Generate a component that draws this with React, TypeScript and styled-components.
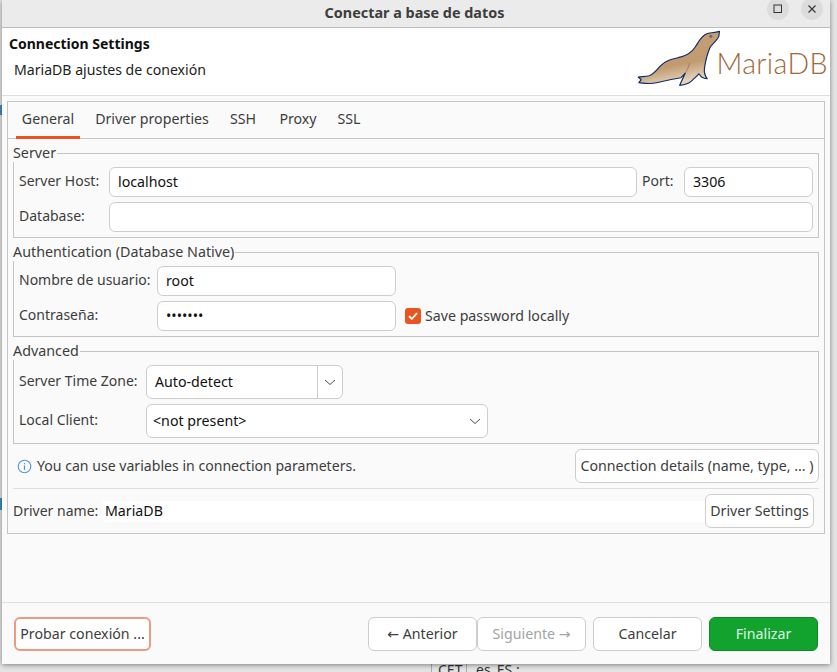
import React from "react";
import styled, { createGlobalStyle } from "styled-components";

const Global = createGlobalStyle`
  html, body { margin: 0; padding: 0; width: 837px; height: 672px; overflow: hidden; background: #e6e6e6; }
  * { box-sizing: border-box; }
  body { font-family: "Noto Sans", "Open Sans", sans-serif; font-size: 14.2px; color: #3d3d3d; }
`;

const Desktop = styled.div`
  position: relative;
  width: 837px;
  height: 672px;
  padding: 0 7px 8px 2px;
  background: #e4e4e4;
  overflow: hidden;
`;
const BehindText = styled.span<{ $x: number }>`
  position: absolute;
  left: ${(p) => p.$x}px;
  top: 660px;
  font-size: 14px;
  color: #333;
`;
const BehindRule = styled.i`
  position: absolute;
  left: 431px;
  top: 664px;
  width: 36px;
  height: 8px;
  border-left: 1px solid #aaa;
  border-right: 1px solid #aaa;
`;
const BehindMark = styled.i<{ $y: number; $h: number }>`
  position: absolute;
  left: 0;
  top: ${(p) => p.$y}px;
  width: 2px;
  height: ${(p) => p.$h}px;
  background: #3f8fc4;
`;
const Window = styled.div`
  position: relative;
  z-index: 1;
  width: 828px;
  height: 664px;
  display: flex;
  flex-direction: column;
  background: #fafafa;
  box-shadow: 0 1px 5px rgba(0, 0, 0, 0.45);
`;
const TitleBar = styled.div`
  position: relative;
  height: 28px;
  flex: none;
  display: flex;
  align-items: center;
  justify-content: center;
  background: #ebebeb;
  border-bottom: 1px solid #bdbdbd;
  font-weight: 700;
  font-size: 14.4px;
  color: #3d3d3d;
  line-height: 18px;
  overflow: hidden;
  padding: 8px 3px 10px 0;
`;
const WinButtons = styled.div`
  position: absolute;
  right: 7px;
  top: -2px;
  display: flex;
  gap: 12px;
`;
const WinButton = styled.div`
  width: 22px;
  height: 22px;
  border-radius: 50%;
  background: #dcdcdc;
  display: flex;
  align-items: center;
  justify-content: center;
`;
const Header = styled.div`
  height: 68px;
  flex: none;
  display: flex;
  justify-content: space-between;
  background: #fff;
  border-bottom: 1px solid #dedede;
  padding: 7px 2px 0 7px;
`;
const HeaderText = styled.div`
  display: flex;
  flex-direction: column;
`;
const HeaderTitle = styled.div`
  font-weight: 700;
  font-size: 14px;
  line-height: 18px;
  color: #111;
`;
const HeaderSub = styled.div`
  margin: 8px 0 0 5px;
  font-size: 14.1px;
  line-height: 18px;
  color: #222;
`;
const Logo = styled.div`
  display: flex;
  align-items: flex-end;
  margin-top: -6px;
  height: 58px;
`;
const LogoWord = styled.span`
  font-family: "Lato", sans-serif;
  font-weight: 300;
  font-size: 28.5px;
  line-height: 28px;
  color: #a0693a;
  margin: 0 0 10px -6px;
  letter-spacing: 0.4px;
`;
const Body = styled.div`
  flex: 1;
  padding: 5px 5px 0;
  border-bottom: 1px solid #dedede;
`;
const Panel = styled.div`
  height: 433px;
  border: 1px solid #c4c4c4;
  display: flex;
  flex-direction: column;
`;
const Tabs = styled.div`
  height: 37px;
  flex: none;
  display: flex;
  padding-left: 8px;
  border-bottom: 1px solid #c4c4c4;
`;
const Tab = styled.div<{ $active?: boolean; $w: number }>`
  width: ${(p) => p.$w}px;
  height: 37px;
  display: flex;
  align-items: center;
  justify-content: center;
  padding-bottom: 1px;
  font-size: 14.2px;
  color: #3d3d3d;
  border-bottom: 3px solid ${(p) => (p.$active ? "#e95420" : "transparent")};
`;
const PanelBody = styled.div`
  flex: 1;
  display: flex;
  flex-direction: column;
  padding: 5px 5px 0;
`;
const Group = styled.fieldset<{ $mt?: number }>`
  margin: ${(p) => p.$mt ?? 0}px 0 0;
  padding: 0;
  min-width: 0;
  border: 1px solid #c4c4c4;
`;
const Legend = styled.legend`
  padding: 0 1px 0 0;
  margin-left: -1px;
  font-size: 14.3px;
  line-height: 18px;
  color: #3d3d3d;
`;
const Rows = styled.div<{ $cols: string; $pb?: number }>`
  display: grid;
  grid-template-columns: ${(p) => p.$cols};
  row-gap: 5px;
  align-items: center;
  padding: 5px 5px ${(p) => p.$pb ?? 5}px;
`;
const Label = styled.label<{ $pl?: number }>`
  font-size: 14px;
  line-height: 18px;
  padding: 0 0 2px ${(p) => p.$pl ?? 0}px;
  color: #3d3d3d;
  white-space: nowrap;
`;
const Input = styled.input<{ $span?: number }>`
  height: 30px;
  width: 100%;
  grid-column: ${(p) => (p.$span ? `span ${p.$span}` : "auto")};
  border: 1px solid #cdcdcd;
  border-radius: 6px;
  background: #fff;
  padding: 0 8px 2px;
  font: inherit;
  font-size: 14.2px;
  color: #111;
  outline: none;
`;
const Check = styled.div`
  display: flex;
  align-items: center;
  gap: 4px;
  margin-left: 9px;
  font-size: 14.2px;
  color: #3d3d3d;
`;
const CheckBox = styled.span`
  width: 16px;
  height: 16px;
  border-radius: 3px;
  background: #e95420;
  display: flex;
  align-items: center;
  justify-content: center;
`;
const CheckLabel = styled.span`
  padding-bottom: 2px;
`;
const Combo = styled.div<{ $w: number; $padLeft: number }>`
  width: ${(p) => p.$w}px;
  height: 34px;
  display: flex;
  align-items: center;
  justify-content: space-between;
  border: 1px solid #cdcdcd;
  border-radius: 6px;
  background: #fff;
  padding-left: ${(p) => p.$padLeft}px;
  font-size: 14.2px;
  color: #111;
`;
const ComboText = styled.span`
  padding-bottom: 2px;
`;
const ComboDivided = styled.span`
  width: 25px;
  height: 100%;
  display: flex;
  align-items: center;
  justify-content: center;
  border-left: 1px solid #cdcdcd;
`;
const ComboPlain = styled.span`
  width: 26px;
  display: flex;
  align-items: center;
  justify-content: center;
  padding-left: 2px;
`;
const InfoRow = styled.div`
  height: 34px;
  margin-top: 5px;
  display: flex;
  align-items: center;
  justify-content: space-between;
  padding-left: 4px;
`;
const InfoText = styled.div`
  display: flex;
  align-items: center;
  gap: 5px;
  font-size: 14.1px;
  color: #3d3d3d;
`;
const InfoLabel = styled.span`
  padding-bottom: 1px;
`;
const Button = styled.button<{ $w: number }>`
  width: ${(p) => p.$w}px;
  height: 34px;
  padding: 0 0 2px;
  border: 1px solid #cdcdcd;
  border-radius: 6px;
  background: #fff;
  font: inherit;
  font-size: 14.2px;
  color: #3d3d3d;
  white-space: nowrap;
`;
const Arrow = styled.span`
  font-family: "DejaVu Sans", sans-serif;
  font-size: 14px;
`;
const Separator = styled.div`
  height: 1px;
  margin-top: 5px;
  background: #dedede;
`;
const DriverRow = styled.div`
  height: 34px;
  margin-top: 5px;
  padding-right: 5px;
  display: flex;
  align-items: center;
`;
const DriverLabel = styled.span`
  width: 90px;
  flex: none;
  font-size: 14px;
  padding-bottom: 1px;
  color: #3d3d3d;
`;
const DriverValue = styled.div`
  flex: 1;
  height: 21px;
  line-height: 20px;
  background: #fff;
  padding-left: 2px;
  color: #111;
  font-size: 14.2px;
`;
const Footer = styled.div`
  height: 61px;
  flex: none;
  display: flex;
  align-items: flex-start;
  justify-content: space-between;
  padding: 14px 12px 0 12px;
`;
const FooterRight = styled.div`
  display: flex;
  align-items: center;
`;
const TestButton = styled(Button)`
  border: 2px solid #ee9a82;
`;
const GhostButton = styled(Button)<{ $ml?: number }>`
  margin-left: ${(p) => p.$ml ?? 0}px;
  &:disabled { color: #a3a3a3; }
`;
const PrimaryButton = styled(Button)`
  margin-left: 7px;
  background: #12a32e;
  border-color: #0e8a26;
  color: #dff5e3;
`;

const Seal = () => (
  <svg width="85" height="58" viewBox="30 25 255 175" aria-hidden="true">
    <defs>
      <linearGradient id="sealFill" x1="0" y1="0" x2="0.3" y2="1">
        <stop offset="0" stopColor="#c9a077" />
        <stop offset="0.7" stopColor="#c19a70" />
        <stop offset="1" stopColor="#e4d2ba" />
      </linearGradient>
    </defs>
    <path
      d="M278 32 C262 38 248 35 238 40 C222 48 216 62 206 78 C196 94 184 104 160 110 C136 116 118 118 100 136 C90 148 80 162 66 166 C54 169 42 168 33 170 L42 178 L35 187 C52 189 70 192 88 187 C112 181 136 176 162 172 L175 158 L158 195 C172 194 186 190 196 180 C204 172 210 168 216 160 L224 170 C230 174 236 175 241 175 C234 166 231 155 233 142 C236 122 242 98 250 80 C256 70 272 58 276 48 Z"
      fill="url(#sealFill)"
      stroke="#0d2b66"
      strokeWidth="3.5"
      strokeLinejoin="round"
    />
    <path d="M175 158 C180 148 186 138 188 128" fill="none" stroke="#8a6a48" strokeWidth="2" />
    <circle cx="252" cy="47" r="5" fill="#6f6a68" />
  </svg>
);

const Chevron = () => (
  <svg width="14" height="8" viewBox="0 0 14 8" aria-hidden="true">
    <path d="M2 2l5 4.5L12 2" fill="none" stroke="#4a4a4a" strokeWidth="1" />
  </svg>
);

const InfoIcon = () => (
  <svg width="15" height="15" viewBox="0 0 15 15" aria-hidden="true">
    <circle cx="7.5" cy="7.5" r="6.3" fill="none" stroke="#4a9ad4" strokeWidth="1.1" />
    <rect x="6.9" y="6.4" width="1.2" height="4.6" fill="#4a9ad4" />
    <rect x="6.9" y="4" width="1.2" height="1.3" fill="#4a9ad4" />
  </svg>
);

export default function App() {
  return (
    <Desktop>
      <Global />
      <BehindMark $y={105} $h={10} />
      <BehindMark $y={498} $h={12} />
      <BehindRule />
      <BehindText $x={438}>CET</BehindText>
      <BehindText $x={476}>es_ES :</BehindText>
      <Window>
        <TitleBar>
          Conectar a base de datos
          <WinButtons>
            <WinButton>
              <svg width="10" height="10" viewBox="0 0 10 10" aria-hidden="true">
                <rect x="1" y="1" width="7.5" height="7.5" fill="none" stroke="#333" strokeWidth="1" />
              </svg>
            </WinButton>
            <WinButton>
              <svg width="10" height="10" viewBox="0 0 10 10" aria-hidden="true">
                <path d="M1.5 1.5l7 7M8.5 1.5l-7 7" fill="none" stroke="#333" strokeWidth="1.1" />
              </svg>
            </WinButton>
          </WinButtons>
        </TitleBar>
        <Header>
          <HeaderText>
            <HeaderTitle>Connection Settings</HeaderTitle>
            <HeaderSub>MariaDB ajustes de conexión</HeaderSub>
          </HeaderText>
          <Logo>
            <Seal />
            <LogoWord>MariaDB</LogoWord>
          </Logo>
        </Header>
        <Body>
          <Panel>
            <Tabs>
              <Tab $active $w={64}>General</Tab>
              <Tab $w={144}>Driver properties</Tab>
              <Tab $w={38}>SSH</Tab>
              <Tab $w={72}>Proxy</Tab>
              <Tab $w={30}>SSL</Tab>
            </Tabs>
            <PanelBody>
              <Group>
                <Legend>Server</Legend>
                <Rows $cols="90px 1fr 47px 129px">
                  <Label>Server Host:</Label>
                  <Input readOnly value="localhost" />
                  <Label $pl={5}>Port:</Label>
                  <Input readOnly value="3306" />
                  <Label>Database:</Label>
                  <Input readOnly value="" $span={3} />
                </Rows>
              </Group>
              <Group $mt={5}>
                <Legend>Authentication (Database Native)</Legend>
                <Rows $cols="138px 239px 1fr" $pb={5}>
                  <Label>Nombre de usuario:</Label>
                  <Input readOnly value="root" />
                  <span />
                  <Label>Contraseña:</Label>
                  <Input readOnly type="password" value="1234567" />
                  <Check>
                    <CheckBox>
                      <svg width="12" height="12" viewBox="0 0 12 12" aria-hidden="true">
                        <path d="M2 6.2l2.8 2.8L10 3.2" fill="none" stroke="#fff" strokeWidth="1.8" />
                      </svg>
                    </CheckBox>
                    <CheckLabel>Save password locally</CheckLabel>
                  </Check>
                </Rows>
              </Group>
              <Group $mt={5}>
                <Legend>Advanced</Legend>
                <Rows $cols="127px 1fr">
                  <Label>Server Time Zone:</Label>
                  <Combo $w={197} $padLeft={8}>
                    <ComboText>Auto-detect</ComboText>
                    <ComboDivided><Chevron /></ComboDivided>
                  </Combo>
                  <Label>Local Client:</Label>
                  <Combo $w={342} $padLeft={6}>
                    <ComboText>{"<not present>"}</ComboText>
                    <ComboPlain><Chevron /></ComboPlain>
                  </Combo>
                </Rows>
              </Group>
              <InfoRow>
                <InfoText>
                  <InfoIcon />
                  <InfoLabel>You can use variables in connection parameters.</InfoLabel>
                </InfoText>
                <Button $w={244}>Connection details (name, type, ... )</Button>
              </InfoRow>
              <Separator />
              <DriverRow>
                <DriverLabel>Driver name:</DriverLabel>
                <DriverValue>MariaDB</DriverValue>
                <Button $w={109}>Driver Settings</Button>
              </DriverRow>
            </PanelBody>
          </Panel>
        </Body>
        <Footer>
          <TestButton $w={137}>Probar conexión ...</TestButton>
          <FooterRight>
            <GhostButton $w={109}><Arrow>←</Arrow> Anterior</GhostButton>
            <GhostButton $w={109} disabled>Siguiente <Arrow>→</Arrow></GhostButton>
            <GhostButton $w={109} $ml={7}>Cancelar</GhostButton>
            <PrimaryButton $w={109}>Finalizar</PrimaryButton>
          </FooterRight>
        </Footer>
      </Window>
    </Desktop>
  );
}
